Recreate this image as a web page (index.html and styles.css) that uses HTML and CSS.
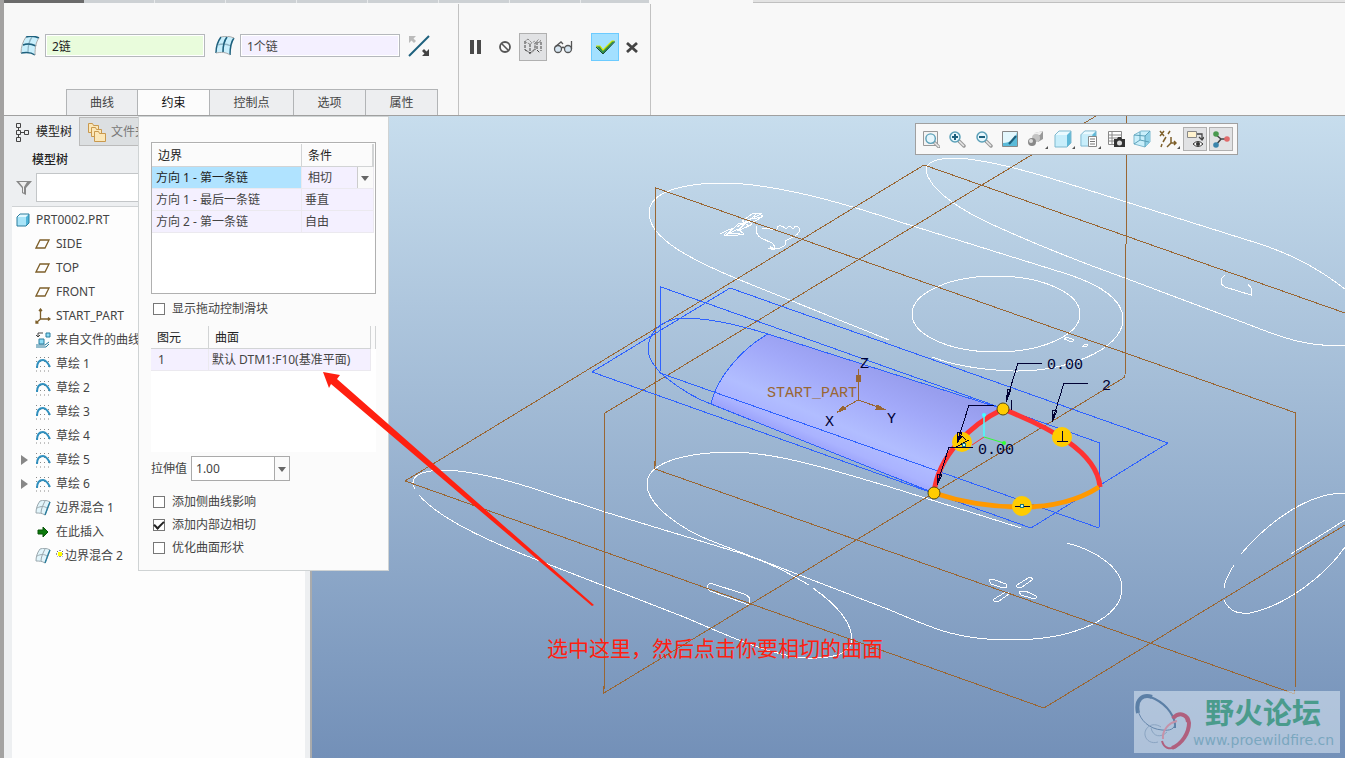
FILE: index.html
```html
<!DOCTYPE html>
<html lang="zh-CN">
<head>
    <meta charset="UTF-8">
    <meta name="viewport" content="width=device-width, initial-scale=1.0">
    <title>边界混合 - PRT0002</title>
    <link rel="stylesheet" href="styles.css">
</head>
<body>
    <!-- shared icons -->
    <svg class="sprite" aria-hidden="true">
        <symbol id="i-plane" viewBox="0 0 16 16"><path d="M5 4h9l-4 8H1z" fill="none" stroke="#7d5f2a" stroke-width="1.3"/></symbol>
        <symbol id="i-sketch" viewBox="0 0 16 16">
            <path d="M1 1.500h14M1 5.500h14M1 10.500h14M1 15h14" stroke="#888" stroke-dasharray="1 3"/>
            <path d="M2 12C2 6 5 4 8 4s5 3 7 7" fill="none" stroke="#2f8fbe" stroke-width="2"/>
        </symbol>
        <symbol id="i-surf" viewBox="0 0 20 20">
            <path d="M6 1c4-1 9-1 13 1-3 4-4 9-4 17C11 16 6 16 1 17 1 11 3 5 6 1z" fill="#c9effc"/>
            <path d="M12 1c-3 4-4 9-4 15M3 9c5-2 9-1 13 1" fill="none" stroke="#8fb4c4" stroke-width="1.300"/>
        </symbol>
        <symbol id="i-blend" viewBox="0 0 16 16">
            <path d="M5 1c3-1 7-1 10 1-1 4-3 8-5 13-3-2-6-2-9-2 0-4 1-8 4-12z" fill="#e2f5fb" stroke="#9aa8ae"/>
            <path d="M10 1C8 5 6 9 6 13M2 8c4-2 7-2 10 0" fill="none" stroke="#9aa8ae"/>
            <path d="M15 2c-2 4-3 8-5 13" fill="none" stroke="#2b7d9d" stroke-width="1.400"/>
        </symbol>
        <symbol id="i-cube" viewBox="0 0 18 18">
            <path d="M1 5l4-4h12v12l-4 4H1z" fill="#5fb9d8"/><path d="M1 5h12v12H1z" fill="#c8eefb"/><path d="M1 5l4-4h12l-4 4z" fill="#eafaff"/>
            <path d="M1 5l4-4h12v12l-4 4H1z" fill="none" stroke="#7fb9cf"/>
        </symbol>
        <symbol id="i-part" viewBox="0 0 14 14">
            <path d="M1 4l3-3h9v9l-3 3H1z" fill="#4fb4d8"/><path d="M1 4h9v9H1z" fill="#a9e4f8"/><path d="M1 4l3-3h9l-3 3z" fill="#e2f8ff"/>
            <path d="M1 4l3-3h9v9l-3 3H1z" fill="none" stroke="#2b7d9d"/>
        </symbol>
        <symbol id="i-lens" viewBox="0 0 18 18">
            <path d="M11 11l5 5" stroke="#999" stroke-width="3.500" stroke-linecap="round"/><path d="M11 11l5 5" stroke="#e8e8e8" stroke-width="1.500"/>
            <circle cx="7" cy="7" r="5" fill="#e6f6fc" stroke="#5ba0b8" stroke-width="1.500"/>
        </symbol>
    </svg>

    <header class="ribbon">
        <div class="ribbon-top"><span class="file-tab"></span><span class="other-tabs"></span><span class="current-tab"></span><span class="rest-tabs"></span></div>
        <div class="ribbon-body">
            <section class="group group-blend">
                <div class="collectors">
                    <label class="surf-icon" for="chain1" title="第一方向">
                        <svg width="20" height="20"><use href="#i-surf"/><path d="M6 1c4-1 9-1 13 1M3 9c5-2 9-1 13 1M1 17c5-1 10-1 14 2" fill="none" stroke="#1d607d" stroke-width="1.500"/><path d="M6 1C3 5 1 11 1 17M19 2c-3 4-4 9-4 17" fill="none" stroke="#aaa"/></svg>
                    </label>
                    <input id="chain1" class="chain active" type="text" value="2链">
                    <label class="surf-icon" for="chain2" title="第二方向">
                        <svg width="20" height="20"><use href="#i-surf"/><path d="M6 1C3 5 1 11 1 17M12 1c-3 4-4 9-4 15M19 2c-3 4-4 9-4 17" fill="none" stroke="#1d607d" stroke-width="1.500"/><path d="M6 1c4-1 9-1 13 1M1 17c5-1 10-1 14 2" fill="none" stroke="#aaa"/></svg>
                    </label>
                    <input id="chain2" class="chain" type="text" value="1个链">
                    <button class="plain flip" type="button" aria-label="反向">
                        <svg width="22" height="22"><path d="M1 1h7L5.500 3.500 8 6 6 8 3.500 5.500 1 8z" fill="#bbb"/><path d="M21 21h-7l2.500-2.500L14 16l2-2 2.500 2.500L21 14z" fill="#444"/><path d="M1 21L21 1" stroke="#1d607d" stroke-width="2"/></svg>
                    </button>
                </div>
                <nav class="tabs">
                    <button type="button">曲线</button>
                    <button type="button" class="selected">约束</button>
                    <button type="button" class="wide">控制点</button>
                    <button type="button">选项</button>
                    <button type="button">属性</button>
                </nav>
            </section>
            <section class="group group-actions">
                <button class="plain" type="button" aria-label="暂停"><svg width="12" height="14"><path d="M1 0h4v14H1zM8 0h4v14H8z" fill="#4a4a4a"/></svg></button>
                <button class="plain" type="button" aria-label="无预览"><svg width="14" height="14"><circle cx="7" cy="7" r="5" fill="none" stroke="#555" stroke-width="1.800"/><path d="M3.500 3.500l7 7" stroke="#555" stroke-width="1.600"/></svg></button>
                <button class="toggled" type="button" aria-label="分离预览">
                    <svg width="20" height="18" fill="none" stroke="#777"><path d="M2 3v9M2 12l4 2 1 2M7 6v9l5-4V5M14 4v8l3 3M18 4v9" stroke="#444" stroke-dasharray="3 1"/><path d="M1 4l4-3M2 4l5 2 5-3M5 1l4 4M12 5L16 1M13 4h6M15 5l3-3M7 16l6-5" stroke="#888" stroke-dasharray="2 1"/></svg>
                </button>
                <button class="plain" type="button" aria-label="预览"><svg width="20" height="14" fill="none" stroke="#555" stroke-width="1.300"><circle cx="5" cy="9" r="3.500" fill="#d6e6f2"/><circle cx="15" cy="9" r="3.500" fill="#d6e6f2"/><path d="M8.500 8q1.500-1.500 3 0M2 7l6-5 2 2M18.500 9V1"/></svg></button>
                <button class="confirm" type="button" aria-label="确定"><svg width="20" height="16"><path d="M1 7h4l3 4 9-9h3L8 15z" fill="#2f8f4e"/><path d="M1 7h4l3 4 9-9h2.500" fill="none" stroke="#d4e800" stroke-width="1.200"/><path d="M1 8l7 7L20 2.500" fill="none" stroke="#1c4a31"/></svg></button>
                <button class="plain" type="button" aria-label="取消"><svg width="12" height="12"><path d="M1 2l10 9M11 2L1 11" stroke="#444" stroke-width="2.800"/></svg></button>
            </section>
        </div>

        <!-- 约束 slide-down panel -->
        <div class="panel">
            <div class="bounds-box">
                <table class="bounds">
                    <thead><tr><th>边界</th><th>条件</th></tr></thead>
                    <tbody>
                        <tr class="current">
                            <td>方向 1 - 第一条链</td>
                            <td>
                                <div class="cell-select">
                                    <select aria-label="条件"><option>相切</option><option>垂直</option><option>自由</option></select>
                                    <svg width="9" height="5"><path d="M1 0h8L5 5z" fill="#666"/></svg>
                                </div>
                            </td>
                        </tr>
                        <tr><td>方向 1 - 最后一条链</td><td>垂直</td></tr>
                        <tr><td>方向 2 - 第一条链</td><td>自由</td></tr>
                    </tbody>
                </table>
            </div>
            <label class="check"><input type="checkbox"> 显示拖动控制滑块</label>
            <div class="items-box">
                <table class="items">
                    <thead><tr><th>图元</th><th>曲面</th></tr></thead>
                    <tbody><tr><td>1</td><td>默认 DTM1:F10(基准平面)</td></tr></tbody>
                </table>
            </div>
            <div class="stretch">
                <label for="stretch">拉伸值</label>
                <div class="combo">
                    <select id="stretch"><option>1.00</option></select>
                    <svg width="9" height="5"><path d="M1 0h8L5 5z" fill="#666"/></svg>
                </div>
            </div>
            <div class="options">
                <label class="check"><input type="checkbox"> 添加侧曲线影响</label>
                <label class="check"><input type="checkbox" checked> 添加内部边相切</label>
                <label class="check"><input type="checkbox"> 优化曲面形状</label>
            </div>
        </div>
    </header>

    <main class="workspace">
        <aside class="sidebar">
            <div class="side-tabs">
                <button type="button" class="selected">
                    <svg width="14" height="20" fill="none" stroke="#444"><path d="M1.500 1.500h4v4h-4zM1.500 8.500h4v4h-4zM1.500 15.500h4v4h-4zM9.500 8.500h4v4h-4zM3.500 6v2M3.500 13v2M6 10.500h3"/></svg>
                    模型树
                </button>
                <button type="button">
                    <svg width="20" height="20" fill="#fbe7b8" stroke="#c9994e"><path d="M1.500 1.500h4l1 2h5v7h-10z"/><path d="M4.500 5.500h4l1 2h5v7h-10z"/><path d="M7.500 9.500h4l1 2h6v8h-11z"/></svg>
                    文件夹
                </button>
            </div>
            <h2>模型树</h2>
            <div class="filter">
                <svg width="16" height="16"><path d="M0 1h16l-6 7v7l-4-2V8z" fill="#888"/><path d="M3 2h8L8 7v6l-1-1V7z" fill="#eee"/></svg>
                <input type="text" aria-label="过滤">
            </div>
            <ul class="tree">
                <li class="root"><svg><use href="#i-part"/></svg>PRT0002.PRT</li>
                <li><i></i><svg><use href="#i-plane"/></svg>SIDE</li>
                <li><i></i><svg><use href="#i-plane"/></svg>TOP</li>
                <li><i></i><svg><use href="#i-plane"/></svg>FRONT</li>
                <li><i></i><svg viewBox="0 0 16 16" fill="none" stroke="#7d5f2a" stroke-width="1.300"><path d="M5.500 1v10h9M5.500 11L1 15M4 3l1.500-2L7 3M13 9.500l2 1.500-2 1.500M1 12.500V15h2.500"/></svg>START_PART</li>
                <li><i></i><svg viewBox="0 0 16 16"><path d="M11 1h4v4h-4zM4 7h5v5H4z" fill="#8fdcf5" stroke="#2b7d9d"/><path d="M1 13h9l4-3M1 15h10l3-3" fill="none" stroke="#2b7d9d"/><path d="M8 1H3v4M1 3l2 2 2-2" fill="none" stroke="#444"/></svg>来自文件的曲线</li>
                <li><i></i><svg><use href="#i-sketch"/></svg>草绘 1</li>
                <li><i></i><svg><use href="#i-sketch"/></svg>草绘 2</li>
                <li><i></i><svg><use href="#i-sketch"/></svg>草绘 3</li>
                <li><i></i><svg><use href="#i-sketch"/></svg>草绘 4</li>
                <li><i class="more"></i><svg><use href="#i-sketch"/></svg>草绘 5</li>
                <li><i class="more"></i><svg><use href="#i-sketch"/></svg>草绘 6</li>
                <li><i></i><svg><use href="#i-blend"/></svg>边界混合 1</li>
                <li><i></i><svg viewBox="0 0 16 16"><path d="M3 6h5V3l5 5-5 5v-3H3z" fill="#0c7a0c" stroke="#095509"/></svg>在此插入</li>
                <li><i></i><svg><use href="#i-blend"/></svg><span class="star"><svg viewBox="0 0 8 8"><path d="M4 0v8M0 4h8M1 1l6 6M7 1L1 7" stroke="#333" stroke-dasharray="1 1"/><path d="M2 2h4v4H2z" fill="#ff0"/></svg></span>边界混合 2</li>
            </ul>
        </aside>

        <div class="viewport">
            <svg class="scene" viewBox="312 116 1033 642" preserveAspectRatio="xMinYMin slice">
                <defs>
                    <linearGradient id="cyl" gradientUnits="userSpaceOnUse" x1="880" y1="368" x2="842" y2="458">
                        <stop offset="0" stop-color="#989eee"/>
                        <stop offset="0.300" stop-color="#a2a9f9"/>
                        <stop offset="0.700" stop-color="#b1bdff"/>
                        <stop offset="0.900" stop-color="#aab3ff"/>
                        <stop offset="1" stop-color="#9ca3fb"/>
                    </linearGradient>
                </defs>

                <path class="skin" d="M768 334L1003 409C972 424 938 455 934 493L711 404C716 379 741 349 768 334z"/>

                <!-- sketch curves -->
                <g class="sketch">
                    <path d="M889 340L735 278C690 259 649 238 649 213C649 192 682 183 725 183C775 184 838 201 900 222L1067 274C1098 284 1123 299 1123 319C1123 350 1065 372 1013 371C985 370 955 366 932 357"/>
                    <path d="M1345 289C1315 266 1290 254 1260 244L1050 178C1020 169 983 159 955 158C938 158 926 162 926 170C929 191 965 213 1000 228C1040 246 1080 262 1125 278L1250 325C1280 337 1310 348 1345 345"/>
                    <ellipse cx="996" cy="314" rx="84" ry="38"/>
                    <path d="M415 489C408 477 420 470 445 470C473 471 504 479 535 489L605 512L740 553C770 563 785 571 809 585M813 588C837 605 852 623 852 640C850 658 820 660 795 657C757 650 720 632 684 617L540 561C495 544 440 520 419 495"/>
                    <path d="M1021 528L890 487C845 474 780 452 730 452C680 453 647 464 647 484C647 505 680 529 714 542L890 610C930 627 955 640 1010 640C1075 640 1122 618 1122 588C1122 569 1098 551 1067 543"/>
                    <path d="M710 591Q705 586 710 583L744 594Q751 597 750 602Q749 606 744 603z"/>
                    <path d="M1241 554C1272 518 1310 493 1345 493M1234 565Q1225 579 1224 588M1224 600C1230 613 1240 614 1250 613C1285 606 1325 576 1345 547M1291 554L1345 520"/>
                    <path d="M989 580Q990 578 995 580L1006 584Q1009 588 1003 588L991 584zM1017 585L1028 578Q1033 577 1032 580L1022 587Q1016 589 1017 585zM994 599L1004 593Q1009 591 1009 594L999 601Q993 603 994 599zM1019 592Q1024 590 1030 593L1036 596Q1039 599 1031 598L1021 595z"/>
                    <path d="M1225 275L1221 279V284L1225 287L1251 295V288L1248 284"/>
                    <path d="M1064 339L1067 337L1074 340L1072 342zM1083 346L1085 344H1088L1087 346z"/>
                    <path d="M757 226Q754 233 761 238L772 243Q776 247 774 248H780Q787 246 785 241L793 237Q801 233 799 228Q796 224 793 229Q789 224 786 229Q781 224 777 227Q779 231 770 229L762 228M768 248L775 250L770 246L773 250"/>
                    <path d="M720 234L728 230L734 228L726 235L738 229L744 234L732 236L724 235L727 232M734 228L739 223L745 224L737 231L749 226L742 221L746 219L752 224L748 227M744 220L752 214L762 213L752 219L762 217L755 221L748 222L757 213L763 216L758 219M728 233L740 234M737 227L755 216M742 225L750 220"/>
                </g>

                <!-- datum planes -->
                <g class="datum">
                    <path d="M656 188L1296 413L1295 694L655 469z"/>
                    <path d="M1126 116V244L1125 377L604 693L605 413L1096 116"/>
                    <path d="M1345 313L924 165L405 481L1044 708L1345 525"/>
                </g>
                <g class="blue">
                    <path d="M730 288L1168 443L1031 528L592 372z"/>
                    <path d="M661 287L1100 443L1099 528L660 373z"/>
                    <path d="M1003 409L768 334C736 324 708 318 682 318C659 320 648 334 648 350C649 363 660 373 669 380C682 390 697 399 711 404L934 493M768 334C741 349 716 379 711 404"/>
                </g>

                <!-- boundary chains -->
                <path class="chain1" d="M934 493C938 455 972 424 1003 409C1048 427 1097 451 1100 487"/>
                <path class="chain2" d="M934 493C961 502 991 507 1022 507C1056 507 1082 498 1099 487"/>

                <path d="M984 437V416" stroke="#4ff" stroke-width="1.500"/>
                <path d="M984 437L972 445" stroke="#f33"/>
                <path d="M984 437L1004 443" stroke="#3f3"/>
                <circle cx="984" cy="415" r="2" fill="#4ff"/><circle cx="1004" cy="443" r="2" fill="#3f3"/>

                <g class="handles">
                    <circle cx="962" cy="442" r="10"/><circle cx="1062" cy="437" r="10"/><circle cx="1022" cy="506" r="10"/>
                    <circle class="ring" cx="1003" cy="409" r="6"/><circle class="ring" cx="934" cy="493" r="6"/>
                </g>
                <g class="leader">
                    <path d="M1042 363H1018L1006 402L1008 389L1011 390L1006 402M1007 393H1010M1088 383H1064L1052 422L1053 410L1057 411L1052 422M1053 414H1056M994 405H969L957 443L958 432L962 433L957 443M958 436H961M973 447H949L937 485L938 474L942 475L937 485M938 478H941M1011 400V410"/>
                    <path d="M1062 431V441M1057 441H1068M1015 506H1030M956 447L969 440M957 443L962 436L966 440"/>
                    <circle cx="1022" cy="506" r="2"/><circle cx="964" cy="445" r="2"/>
                </g>
                <g class="csys">
                    <path d="M858 400V369M858 400L837 412M858 400L884 409"/>
                    <path d="M856 375h4v6h-4zM838 412l5-6 3 3zM884 409l-8 0 1-4z" fill="#963"/>
                </g>
                <g class="cad-text">
                    <text class="brown" x="767" y="397">START_PART</text>
                    <text x="860" y="368">Z</text><text x="825" y="426">X</text><text x="887" y="423">Y</text>
                    <text x="1047" y="369">0.00</text><text x="1102" y="390">2</text><text x="978" y="454">0.00</text>
                </g>
            </svg>

            <div class="view-tools">
                <button type="button" aria-label="重新调整"><svg><path d="M1.500 1.500h14v14h-14z" fill="#f4f4f4" stroke="#999"/><g transform="translate(2 2)"><use href="#i-lens" width="17" height="17"/></g></svg></button>
                <button type="button" aria-label="放大"><svg><use href="#i-lens" width="18" height="18"/><path d="M4 7h6M7 4v6" stroke="#1d607d" stroke-width="2"/></svg></button>
                <button type="button" aria-label="缩小"><svg><use href="#i-lens" width="18" height="18"/><path d="M4 7h6" stroke="#1d607d" stroke-width="2"/></svg></button>
                <button type="button" aria-label="重画"><svg><path d="M1.500 1.500h15v15h-15z" fill="#5bbbd9" stroke="#888"/><path d="M2 2h14C15 9 9 13 2 13z" fill="#e3f7fd"/><path d="M8 14l7-8" stroke="#1d607d" stroke-width="2"/></svg></button>
                <button type="button" class="menu" aria-label="渲染选项"><svg><path d="M8 3l8-2v8l-5 3z" fill="#999"/><path d="M7 3l9-2-3 4-6 1z" fill="#eee"/><circle cx="9" cy="8" r="4" fill="#c4c4c4"/><circle cx="5" cy="12" r="4" fill="#888"/><circle cx="4" cy="11" r="2" fill="#ddd"/></svg></button>
                <button type="button" class="menu" aria-label="显示样式"><svg><use href="#i-cube" width="18" height="18"/></svg></button>
                <button type="button" class="menu" aria-label="已保存方向"><svg><use href="#i-cube" width="17" height="17"/><path d="M8.500 6.500h8v10h-8z" fill="#fff" stroke="#888"/><path d="M10 9h5M10 11.500h5M10 14h5" stroke="#777"/></svg></button>
                <button type="button" aria-label="视图管理器"><svg><path d="M1.500 1.500h13v13h-13zM1.500 5h13M1.500 8h13M1.500 11h13M5 2v12" fill="#fff" stroke="#888"/><path d="M7 9h3l1-2h3l1 2h3v8H7z" fill="#333"/><circle cx="12.500" cy="13" r="2.500" fill="#ddd"/></svg></button>
                <button type="button" aria-label="透视图"><svg><path d="M1 5l7-4h9v11l-5 5-11-3z" fill="#c9effb" stroke="#7fb9cf"/><path d="M12 6l5-5v11l-5 5z" fill="#8fd0e6"/><path d="M1 5l11 1v11M12 6l5-5M7 2v8l-6 4M7 10l9 2" fill="none" stroke="#5ba0b8"/></svg></button>
                <button type="button" class="menu" aria-label="基准显示"><svg fill="none" stroke="#7d5f2a" stroke-width="1.500"><path d="M1 1l4 5M5 1L1 6M11 1L9 4M7 7l-3 5M3 14l-1 3M12 7v6h5M12 13l-4 4M15 11l2 2-2 2"/></svg></button>
                <button type="button" class="on" aria-label="注释显示"><svg><path d="M1.500 1.500h9v6h-9z" fill="#fff3cf" stroke="#888"/><path d="M11 4h5v5M13 7l3 3 2-3" fill="none" stroke="#444" stroke-width="1.300"/><path d="M7 14q5-5 10 0-5 5-10 0z" fill="#fff" stroke="#333"/><circle cx="12" cy="14" r="2" fill="#333"/></svg></button>
                <button type="button" class="on" aria-label="旋转中心"><svg><path d="M3 4l6 5-5 6M9 9h6" fill="none" stroke="#444" stroke-width="1.500"/><circle cx="4" cy="4" r="2.800" fill="#4a9a4f"/><circle cx="4" cy="15" r="2.800" fill="#3a84ab"/><circle cx="15" cy="9" r="2.800" fill="#e06a6a"/></svg></button>
            </div>

            <!-- red note, drawn over the panel -->
            <svg class="note" viewBox="312 116 1033 642" preserveAspectRatio="xMinYMin slice">
                <path d="M323 372L340 375L337 379L594 605L592 606L331 384L329 388z"/>
                <text x="547" y="656">选中这里，然后点击你要相切的曲面</text>
            </svg>

            <div class="watermark">
                <svg width="58" height="58" fill="none">
                    <path d="M2 15C2 4 10 1 20 6c12 6 21 18 20 29" stroke="#5b7fa6" stroke-width="2"/>
                    <path d="M3 20C0 6 8 1 17 4" stroke="#5b7fa6" stroke-width="4"/>
                    <path d="M3 17c2 10 11 19 24 20 8 1 13-1 13-7" stroke="#6586ab" stroke-width="1"/>
                    <path d="M38 25c7-7 15-3 16 5 0 10-7 21-17 25" stroke="#b0607e" stroke-width="4"/>
                    <path d="M37 25c8-6 14-3 15 4M41 54c-7 3-12 1-14-6" stroke="#b0607e" stroke-width="2"/>
                    <path d="M26 34c-9-6-17 1-16 8 1 6 7 9 13 7M16 35c2 9 10 10 16 4" stroke="#8aa4c2" stroke-width="1"/>
                    <path d="M42 28c-9 2-15 10-14 18" stroke="#c592a8" stroke-width="2"/>
                </svg>
                <div><strong>野火论坛</strong><span>www.proewildfire.cn</span></div>
            </div>
        </div>
    </main>
</body>
</html>
```

FILE: styles.css
```css
* {
    box-sizing: border-box;
}
body {
    margin: 0;
    height: 100vh;
    display: flex;
    flex-direction: column;
    border-left: 4px solid #a3a2a1;
    background: #f8f8f8;
    color: #444;
    font-family: "Noto Sans", "Noto Sans CJK SC", sans-serif;
    font-size: 12px;
    line-height: 16px;
    overflow: hidden;
}
button, input, select {
    font: inherit;
    color: inherit;
    margin: 0;
}
button {
    padding: 0;
    display: flex;
    align-items: center;
    justify-content: center;
}
svg {
    flex: none;
}
.sprite {
    position: absolute;
    width: 0;
    height: 0;
}

/* ribbon */
.ribbon {
    position: relative;
    flex: none;
    background: #f8f8f8;
    border-bottom: 1px solid #a0a0a0;
}
.ribbon-top {
    display: flex;
    height: 3px;
}
.file-tab {
    width: 80px;
    background: #6b6b6b;
}
.other-tabs {
    width: 565px;
    background: repeating-linear-gradient(to right, #cdd1d4 0 70px, #e8eaeb 70px 71px);
}
.current-tab {
    width: 104px;
}
.rest-tabs {
    flex: 1;
    background: #e3e3e3;
    border-bottom: 1px solid #c0c0c0;
}
.ribbon-body {
    display: flex;
    height: 112px;
    padding-top: 1px;
}
.group {
    border-right: 1px solid #c2c2c2;
}
.group-blend {
    width: 455px;
    display: flex;
    flex-direction: column;
    justify-content: space-between;
}
.collectors {
    display: flex;
    align-items: center;
    padding: 30px 0 0 16px;
}
.surf-icon {
    width: 25px;
    height: 20px;
}
.chain {
    width: 160px;
    height: 23px;
    margin-right: 10px;
    padding: 0 6px;
    border: 1px solid #b5b8bc;
    box-shadow: inset 0 0 0 1px #fff;
    background: #f4f0ff;
}
.chain:last-of-type {
    margin-right: 8px;
}
.chain.active {
    background: #e9fcdc;
    color: #222;
}
.plain {
    border: none;
    background: none;
}
.tabs {
    display: flex;
    padding-left: 62px;
}
.tabs button {
    width: 72px;
    height: 26px;
    border: 1px solid #b2b4b6;
    border-width: 1px 1px 0 0;
    background: #edeef0;
}
.tabs button:first-child {
    border-left-width: 1px;
}
.tabs .wide {
    width: 84px;
}
.tabs .selected {
    background: #fcfcfc;
    color: #111;
}
.group-actions {
    width: 192px;
    display: flex;
    align-items: flex-start;
    padding: 29px 0 0 3px;
}
.group-actions button {
    height: 28px;
    width: 28px;
}
.group-actions button:first-child,
.group-actions button:last-child {
    width: 26px;
}
.group-actions .plain:nth-child(2) {
    margin-left: 3px;
}
.group-actions .toggled {
    border: 1px solid #b0b0b0;
    background: #e1e2e4;
}
.group-actions .plain:nth-child(4) {
    width: 32px;
}
.group-actions .confirm {
    margin-left: 12px;
    border: 1px solid #6ccbff;
    background: #a3e0ff;
}

/* constraint panel */
.panel {
    position: absolute;
    left: 134px;
    top: 116px;
    z-index: 5;
    width: 251px;
    padding: 25px 12px 11px;
    border: 1px solid #cfd3d4;
    background: #fbfbfb;
}
.panel table {
    border-collapse: separate;
    border-spacing: 0;
    table-layout: fixed;
}
.panel th {
    height: 23px;
    padding: 2px 6px 0;
    border-right: 1px solid #d2d4d5;
    border-bottom: 1px solid #d2d4d5;
    background: #fbfbfb;
    color: #222;
    font-weight: normal;
    text-align: left;
}
.panel td {
    height: 22px;
    padding: 0 3px;
    border-right: 1px solid #ebe9ef;
    border-bottom: 1px solid #ebe9ef;
    background: #f4f0ff;
    white-space: nowrap;
}
.bounds-box {
    height: 152px;
    padding: 1px 0;
    border: 1px solid #b0b0b0;
    background: #fff;
}
.bounds {
    width: 222px;
}
.bounds th:first-child {
    width: 150px;
}
.bounds td:first-child {
    padding-left: 4px;
}
.bounds th:last-child {
    border-right-width: 2px;
}
.bounds .current td:first-child {
    background: #b0e3ff;
    color: #222;
}
.bounds .current td:last-child {
    padding: 0;
}
.cell-select, .combo {
    position: relative;
    display: flex;
}
.cell-select svg, .combo svg {
    position: absolute;
    right: 4px;
    top: 50%;
    margin-top: -2px;
    pointer-events: none;
}
select {
    appearance: none;
    width: 100%;
    border: none;
    border-radius: 0;
    background: none;
}
.cell-select select {
    height: 21px;
    padding: 0 6px;
    background: linear-gradient(to right, transparent calc(100% - 16px), #ccc calc(100% - 16px) calc(100% - 15px), #fafafa 0);
}
.check {
    display: flex;
    align-items: center;
    gap: 7px;
    height: 23px;
    padding-left: 2px;
}
.check input {
    appearance: none;
    width: 12px;
    height: 12px;
    border: 1px solid #777;
    background: #fff;
    display: grid;
    place-items: center;
}
.check input:checked::after {
    content: "";
    width: 8px;
    height: 4px;
    margin-top: -2px;
    border: solid #222;
    border-width: 0 0 2px 2px;
    transform: rotate(-45deg);
}
.bounds-box + .check {
    margin: 3px 0 6px;
}
.items-box {
    height: 126px;
    background: #fff;
}
.items {
    width: 220px;
}
.items th:first-child {
    width: 58px;
}
.items th:last-child {
    box-shadow: 4px 0 #fbfbfb, 5px 0 #d2d4d5;
}
.items td:first-child {
    padding-left: 7px;
}
.stretch {
    display: flex;
    align-items: center;
    gap: 4px;
    margin: 4px 0 9px;
}
.combo {
    width: 99px;
    height: 25px;
    border: 1px solid #aaa;
}
.combo select {
    padding: 0 4px;
    background: linear-gradient(to right, #fff calc(100% - 15px), #aaa calc(100% - 15px) calc(100% - 14px), #fafafa 0);
}
.combo svg {
    right: 3px;
}

/* model tree */
.workspace {
    flex: 1;
    min-height: 0;
    display: flex;
}
.sidebar {
    width: 308px;
    flex: none;
    display: flex;
    flex-direction: column;
    padding: 1px 5px 0 8px;
    background: #edeff1;
    border-right: 2px solid #aaabac;
}
.side-tabs {
    display: flex;
    margin-left: -8px;
}
.side-tabs button {
    height: 29px;
    gap: 4px;
    padding: 0 7px;
    border: 1px solid #bbb;
    background: #dcdfe1;
    color: #777;
}
.side-tabs .selected {
    width: 75px;
    gap: 7px;
    padding: 0 0 0 4px;
    border: none;
    background: none;
    color: #222;
}
.sidebar h2 {
    margin: 6px 0 5px 20px;
    font-size: 12px;
    line-height: 16px;
    font-weight: 500;
    color: #222;
}
.filter {
    display: flex;
    align-items: center;
    gap: 4px;
    padding-left: 4px;
}
.filter input {
    flex: 1;
    min-width: 0;
    height: 29px;
    border: 1px solid #c3c6c8;
    background: #fff;
}
.tree {
    flex: 1;
    margin: 4px 0 0;
    padding: 1px 0 0;
    border-top: 1px solid #cfd2d4;
    background: #fdfdfd;
    list-style: none;
    overflow: hidden;
}
.tree li {
    display: flex;
    align-items: center;
    height: 24px;
    padding-left: 9px;
    white-space: nowrap;
}
.tree li.root {
    padding-left: 4px;
}
.tree svg {
    width: 16px;
    height: 16px;
    margin-right: 5px;
}
.tree .root svg {
    width: 14px;
    height: 14px;
    margin-right: 6px;
}
.tree i {
    width: 7px;
    margin-right: 7px;
}
.tree .more {
    border: solid transparent;
    border-width: 5px 0 5px 7px;
    border-left-color: #888;
}
.star {
    width: 8px;
    height: 12px;
    margin-right: 1px;
    line-height: 0;
}
.tree .star svg {
    width: 8px;
    height: 8px;
}

/* graphics area */
.viewport {
    position: relative;
    flex: 1;
    min-width: 0;
    background: linear-gradient(#c7dded, #7390b8);
}
.scene, .note {
    position: absolute;
    left: 0;
    top: 0;
    width: 100%;
    height: 100%;
}
.skin {
    fill: url(#cyl);
}
.sketch, .datum, .blue, .csys {
    fill: none;
    stroke-width: 1;
    shape-rendering: crispEdges;
}
.sketch {
    stroke: #fff;
}
.datum, .csys {
    stroke: #963;
}
.blue {
    stroke: #2f62ff;
}
.chain1, .chain2 {
    fill: none;
    stroke: #f33;
    stroke-width: 5;
}
.chain2 {
    stroke: #f90;
}
.handles {
    fill: #fc0;
}
.handles .ring {
    stroke: #554a10;
    stroke-width: 1;
}
.leader {
    fill: none;
    stroke: #003;
    shape-rendering: crispEdges;
}
.leader circle {
    fill: #cff;
    stroke: #277;
}
.cad-text {
    font-family: "Liberation Mono", monospace;
    font-size: 15px;
    fill: #003;
}
.cad-text .brown {
    fill: #963;
}
.note {
    z-index: 6;
    pointer-events: none;
    fill: #ff2010;
    font-size: 21px;
}
.note text {
    font-family: "Noto Sans CJK SC", sans-serif;
}
.view-tools {
    position: absolute;
    top: 7px;
    right: 107px;
    width: 323px;
    height: 32px;
    display: flex;
    align-items: center;
    justify-content: space-between;
    padding: 0 4px 0 3px;
    border: 1px solid #a0a0a0;
    background: #f8f8f8;
}
.view-tools button {
    position: relative;
    width: 24px;
    height: 24px;
    border: none;
    background: none;
}
.view-tools svg {
    width: 18px;
    height: 18px;
}
.view-tools .on {
    border: 1px solid #b0b0b0;
    background: #e1e2e4;
}
.view-tools .menu::after {
    content: "";
    position: absolute;
    right: 0;
    bottom: 2px;
    border: solid transparent;
    border-width: 0 0 3px 3px;
    border-bottom-color: #555;
}
.watermark {
    position: absolute;
    right: 5px;
    bottom: 5px;
    display: flex;
    width: 206px;
    height: 62px;
    padding: 2px 0 0 1px;
    background: rgba(214, 227, 240, 0.6);
}
.watermark div {
    display: flex;
    flex-direction: column;
}
.watermark strong {
    padding-left: 12px;
    font-family: "Noto Sans CJK SC", sans-serif;
    font-size: 29px;
    line-height: 37px;
    color: #4a9b8c;
}
.watermark span {
    font-family: "DejaVu Sans", sans-serif;
    font-size: 14px;
    line-height: 20px;
    color: #7aa7bf;
}
```
